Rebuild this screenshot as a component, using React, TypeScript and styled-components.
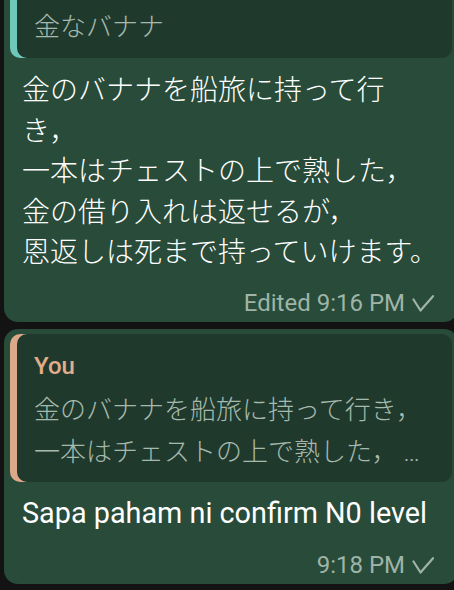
import React from "react";
import styled, { createGlobalStyle } from "styled-components";

const GlobalStyle = createGlobalStyle`
  html, body {
    margin: 0;
    padding: 0;
    background: #131313;
    overflow: hidden;
  }
`;

const Page = styled.div`
  width: 454px;
  height: 590px;
  overflow: hidden;
  background: #131313;
`;

const Feed = styled.div`
  display: flex;
  flex-direction: column;
  gap: 7px;
  margin-top: -31px;
  padding-left: 4px;
`;

const Bubble = styled.div`
  width: 454px;
  box-sizing: border-box;
  background: #284b3a;
  border-radius: 14px;
  padding: 5px 6px 4px;
  display: flex;
  flex-direction: column;
`;

const Reply = styled.div<{ $accent: string; $clippedTop?: boolean }>`
  background: #20392d;
  border-radius: 10px;
  box-shadow: inset 7px 0 0 ${(p) => p.$accent};
  padding: ${(p) => (p.$clippedTop ? "30px" : "12px")} 20px 12px 24px;
  line-height: 41.5px;
`;

const ReplyName = styled.div`
  font-family: Roboto, sans-serif;
  font-weight: 500;
  font-size: 24px;
  color: #e2ad8b;
`;

const ReplyLine = styled.div`
  font-family: "Noto Sans CJK JP", sans-serif;
  font-weight: 300;
  font-size: 26px;
  color: #a6b9ad;
  white-space: nowrap;
  overflow: hidden;
`;

const Ellipsis = styled.span`
  font-family: Roboto, sans-serif;
  line-height: 1;
`;

const Text = styled.div<{ $cjk?: boolean }>`
  padding: 10.5px 12px 0;
  font-family: ${(p) =>
    p.$cjk ? '"Noto Sans CJK JP", sans-serif' : 'Roboto, "Noto Sans CJK JP", sans-serif'};
  font-weight: ${(p) => (p.$cjk ? 300 : 400)};
  font-size: ${(p) => (p.$cjk ? "28px" : "28.8px")};
  line-height: 40.5px;
  color: #ffffff;
  white-space: pre-line;
`;

const Meta = styled.div`
  margin-top: 17px;
  height: 30px;
  display: flex;
  justify-content: flex-end;
  align-items: center;
  gap: 7px;
  padding-right: 18px;
  font-family: Roboto, sans-serif;
  font-size: 24px;
  color: #9fb4a7;
`;

const Check = () => (
  <svg width="22" height="18" viewBox="0 0 22 18" aria-hidden="true">
    <path
      d="M1.5 5.5 L8.5 16.5 L21 2.2"
      fill="none"
      stroke="currentColor"
      strokeWidth="2.2"
      strokeLinecap="round"
      strokeLinejoin="round"
    />
  </svg>
);

const poem =
  "金のバナナを船旅に持って行\nき，\n一本はチェストの上で熟した，\n金の借り入れは返せるが，\n恩返しは死まで持っていけます。";

export default function App() {
  return (
    <Page>
      <GlobalStyle />
      <Feed>
        <Bubble>
          <Reply $accent="#6ec9bb" $clippedTop>
            <ReplyLine>金なバナナ</ReplyLine>
          </Reply>
          <Text $cjk>{poem}</Text>
          <Meta>
            <span>Edited 9:16 PM</span>
            <Check />
          </Meta>
        </Bubble>
        <Bubble>
          <Reply $accent="#dba88a">
            <ReplyName>You</ReplyName>
            <ReplyLine>金のバナナを船旅に持って行き，</ReplyLine>
            <ReplyLine>
              一本はチェストの上で熟した， <Ellipsis>…</Ellipsis>
            </ReplyLine>
          </Reply>
          <Text>Sapa paham ni confirm N0 level</Text>
          <Meta>
            <span>9:18 PM</span>
            <Check />
          </Meta>
        </Bubble>
      </Feed>
    </Page>
  );
}
